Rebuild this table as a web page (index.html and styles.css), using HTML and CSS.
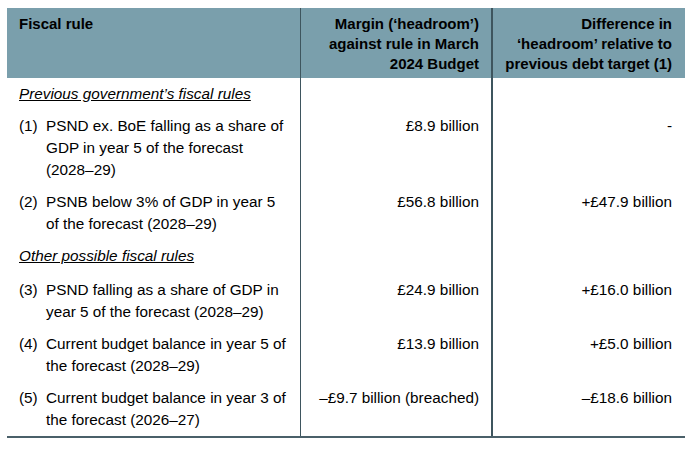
FILE: index.html
```html
<!DOCTYPE html>
<html lang="en">
<head>
<meta charset="utf-8">
<title>Fiscal rules headroom</title>
<link rel="stylesheet" href="styles.css">
</head>
<body>
<table class="fiscal">
  <colgroup>
    <col class="w1">
    <col class="w2">
    <col class="w3">
  </colgroup>
  <thead>
    <tr>
      <th class="c1 left">Fiscal rule</th>
      <th class="c2">Margin (‘headroom’) against rule in March 2024 Budget</th>
      <th class="c3">Difference in ‘headroom’ relative to previous debt target (1)</th>
    </tr>
  </thead>
  <tbody>
    <tr class="section">
      <td class="c1"><span class="heading">Previous government’s fiscal rules</span></td>
      <td class="c2"></td>
      <td class="c3"></td>
    </tr>
    <tr>
      <td class="c1"><div class="item"><span class="num">(1)</span><span class="txt">PSND ex. BoE falling as a share of GDP in year 5 of the forecast (2028–29)</span></div></td>
      <td class="c2">£8.9 billion</td>
      <td class="c3">-</td>
    </tr>
    <tr>
      <td class="c1"><div class="item"><span class="num">(2)</span><span class="txt">PSNB below 3% of GDP in year 5 of the forecast (2028–29)</span></div></td>
      <td class="c2">£56.8 billion</td>
      <td class="c3">+£47.9 billion</td>
    </tr>
    <tr class="section section-2">
      <td class="c1"><span class="heading">Other possible fiscal rules</span></td>
      <td class="c2"></td>
      <td class="c3"></td>
    </tr>
    <tr>
      <td class="c1"><div class="item"><span class="num">(3)</span><span class="txt">PSND falling as a share of GDP in year 5 of the forecast (2028–29)</span></div></td>
      <td class="c2">£24.9 billion</td>
      <td class="c3">+£16.0 billion</td>
    </tr>
    <tr>
      <td class="c1"><div class="item"><span class="num">(4)</span><span class="txt">Current budget balance in year 5 of the forecast (2028–29)</span></div></td>
      <td class="c2">£13.9 billion</td>
      <td class="c3">+£5.0 billion</td>
    </tr>
    <tr class="last">
      <td class="c1"><div class="item"><span class="num">(5)</span><span class="txt">Current budget balance in year 3 of the forecast (2026–27)</span></div></td>
      <td class="c2">–£9.7 billion (breached)</td>
      <td class="c3">–£18.6 billion</td>
    </tr>
  </tbody>
</table>
</body>
</html>
```

FILE: styles.css
```css
html, body {
  background: #ffffff;
}

body {
  margin: 0;
  padding: 8px 0 0 7px;
  font-family: "Liberation Sans", Arial, sans-serif;
  font-size: 15px;
  color: #000000;
}

.fiscal {
  border-collapse: collapse;
  table-layout: fixed;
  width: 678px;
}

.w1 { width: 293px; }
.w2 { width: 192px; }
.w3 { width: 193px; }

.fiscal th {
  background: #7a9fac;
  font-weight: bold;
  line-height: 20px;
  padding: 6px 12px 4px 12px;
  vertical-align: top;
  text-align: right;
}

.fiscal th.left {
  text-align: left;
}

.fiscal td {
  font-size: 15.3px;
  line-height: 22px;
  padding: 5px 12px 5px 12px;
  vertical-align: top;
  text-align: right;
}

.fiscal td.c1 {
  text-align: left;
}

.fiscal .c1 {
  border-right: 1px solid #3e555e;
}

.fiscal .c2 {
  border-right: 2px solid #3e555e;
}

.fiscal .c3 {
  padding-right: 13px;
}

.section-2 td {
  padding-bottom: 7px;
}

.last td {
  border-bottom: 2px solid #4a6069;
}

.heading {
  font-style: italic;
  text-decoration: underline;
}

.item {
  display: flex;
}

.num {
  flex: 0 0 27px;
}

.txt {
  flex: 1 1 auto;
}
```
